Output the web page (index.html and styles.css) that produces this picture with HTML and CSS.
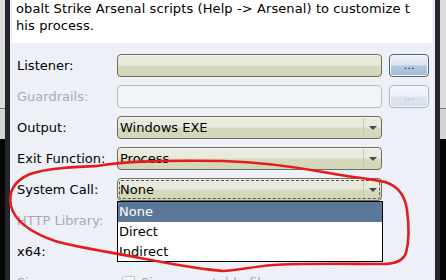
FILE: index.html
```html
<!DOCTYPE html>
<html>
<head>
<meta charset="utf-8">
<link rel="stylesheet" href="styles.css">
</head>
<body>
<div class="desk desk-left">
  <div class="desk-top"></div>
  <div class="desk-mid"></div>
  <div class="desk-black"></div>
</div>
<div class="frame"></div>
<div class="dialog">
  <div class="desc">obalt Strike Arsenal scripts (Help -&gt; Arsenal) to customize t<br>his process.</div>
  <div class="form">
    <div class="label">Listener:</div>
    <div class="field edit"></div>
    <div class="btn">&hellip;</div>

    <div class="label disabled">Guardrails:</div>
    <div class="field off"></div>
    <div class="btn btn-off">&hellip;</div>

    <div class="label">Output:</div>
    <div class="field combo"><span class="val">Windows EXE</span><span class="arrow"><span class="tri"></span></span></div>
    <div></div>

    <div class="label">Exit Function:</div>
    <div class="field combo"><span class="val">Process</span><span class="arrow"><span class="tri"></span></span></div>
    <div></div>

    <div class="label">System Call:</div>
    <div class="field combo focus"><span class="val">None</span><span class="arrow"><span class="tri"></span></span></div>
    <div></div>

    <div class="label disabled">HTTP Library:</div>
    <div class="field combo"><span class="val"></span><span class="arrow"><span class="tri"></span></span></div>
    <div></div>

    <div class="label">x64:</div>
    <div class="check-row"><span class="box"></span></div>
    <div></div>

    <div class="label disabled">Sign</div>
    <div class="check-row disabled"><span class="box box-off"></span><span>Sign executable file</span></div>
    <div></div>
  </div>
  <div class="popup">
    <div class="item sel">None</div>
    <div class="item">Direct</div>
    <div class="item">Indirect</div>
  </div>
</div>
<div class="frame"></div>
<div class="desk desk-right">
  <div class="desk-top"></div>
  <div class="desk-mid"></div>
  <div class="desk-black"></div>
</div>
<svg class="mark" width="446" height="280" viewBox="0 0 446 280">
  <path d="M97,166 C120,162 150,160 223,161 C256,162 290,166 323,172 C350,177 372,179 385,182 C398,186 405,195 407,210 C409,225 409,242 406,253 C403,261 395,264 383,264 C350,264 300,263 273,265 C250,267 235,271 223,271 C195,269 167,263 140,258 C110,252 80,248 55,241 C32,233 15,222 11,206 C8,192 14,181 30,174 C48,168 75,167 97,166 Z" fill="none" stroke="#e41c1c" stroke-width="2.6" stroke-linejoin="round"/>
</svg>
</body>
</html>
```
FILE: styles.css
```css
html, body {
  margin: 0;
  padding: 0;
}
body {
  width: 446px;
  height: 280px;
  overflow: hidden;
  display: flex;
  position: relative;
  font-family: "DejaVu Sans", sans-serif;
  font-size: 13px;
  color: #000;
}
.desk {
  display: flex;
  flex-direction: column;
}
.desk-left { width: 5px; }
.desk-right { width: 6px; }
.desk-top {
  height: 108px;
  background: #dcdcdc;
  border-bottom: 1px solid #7a7a7a;
}
.desk-mid {
  height: 30px;
  background: #d4d4d4;
}
.desk-black {
  flex: 1;
  background: #050505;
}
.frame {
  width: 5px;
  background: #23262d;
}
.dialog {
  flex: 1;
  background: #eef0f8;
  position: relative;
}
.desc {
  margin: 0 3px 0 2px;
  height: 43px;
  background: #fff;
  padding: 0 4px;
  line-height: 17px;
  white-space: nowrap;
  overflow: hidden;
  letter-spacing: 0.1px;
}
.form {
  margin-top: 11px;
  padding-left: 7px;
  display: grid;
  grid-template-columns: 93px 265px 40px;
  grid-auto-rows: 23px;
  column-gap: 7px;
  row-gap: 8px;
}
.label {
  align-self: center;
  white-space: nowrap;
}
.disabled { color: #a6aab0; }
.field {
  box-sizing: border-box;
  border-radius: 4px;
  position: relative;
  display: flex;
  align-items: center;
}
.edit, .combo {
  border: 1px solid #6d6e60;
  background: linear-gradient(#e9eade 0, #e9eade 45%, #d6d9bd 55%, #d3d7b9 100%);
  box-shadow: inset 0 1px 0 #f7f7f0;
}
.off {
  border: 1px solid #b9bcc4;
  background: #f3f4f7;
}
.combo .val {
  flex: 1;
  padding-left: 2px;
  white-space: nowrap;
}
.arrow {
  width: 17px;
  height: 19px;
  margin-right: 1px;
  box-sizing: border-box;
  border-left: 1px solid #c6c8b4;
  display: flex;
  align-items: center;
  justify-content: center;
}
.tri {
  width: 0;
  height: 0;
  border-left: 4px solid transparent;
  border-right: 4px solid transparent;
  border-top: 4px solid #4a4a4a;
  margin-left: 1px;
}
.focus::after {
  content: "";
  position: absolute;
  left: 1px;
  top: 1px;
  right: 1px;
  bottom: 1px;
  border: 1px dashed #55584c;
  border-radius: 2px;
}
.btn {
  box-sizing: border-box;
  border: 1px solid #4f627c;
  border-radius: 4px;
  background: linear-gradient(#edf2f8 0, #dbe4ef 45%, #b3c6dc 55%, #a6bcd6 100%);
  display: flex;
  align-items: center;
  justify-content: center;
  font-size: 11px;
  color: #20242a;
  box-shadow: inset 0 0 0 1px #f4f7fb;
}
.btn-off {
  border-color: #a9b6c6;
  background: linear-gradient(#f4f6fa 0, #eef2f7 45%, #dbe4ee 55%, #d6e0eb 100%);
  color: #a9b3c0;
}
.check-row {
  display: flex;
  align-items: center;
  gap: 6px;
  padding-left: 5px;
}
.box {
  width: 11px;
  height: 11px;
  border: 1px solid #7f8288;
  background: #fff;
  border-radius: 1px;
}
.box-off {
  border-color: #c3c6cc;
  background: #f4f5f8;
}
.popup {
  position: absolute;
  left: 107px;
  top: 201px;
  width: 266px;
  box-sizing: border-box;
  border: 1px solid #000;
  background: #fff;
}
.item {
  height: 19.5px;
  line-height: 19px;
  padding-left: 1px;
  white-space: nowrap;
}
.item.sel {
  background: #5b7898;
  color: #fff;
  height: 20px;
}
.mark {
  position: absolute;
  left: 0;
  top: 0;
  pointer-events: none;
}
```
